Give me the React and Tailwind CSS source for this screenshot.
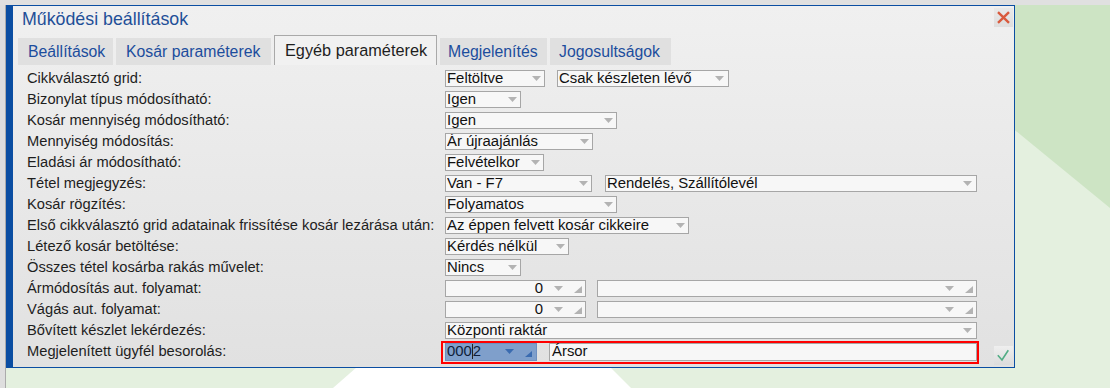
import React from "react";

const FONT = { fontFamily: '"Liberation Sans", Arial, sans-serif' };

function Arrow({ color = "#b3b3b3" }) {
  return (
    <svg width="9" height="5" viewBox="0 0 9 5" className="shrink-0">
      <path d="M0 0H9L4.5 5Z" fill={color} />
    </svg>
  );
}

function Tri({ color = "#b3b3b3", size = 8 }) {
  return (
    <svg width={size} height={size - 1} viewBox={`0 0 ${size} ${size - 1}`} className="shrink-0 self-end mb-[3px]">
      <path d={`M${size} 0V${size - 1}H0Z`} fill={color} />
    </svg>
  );
}

function Field({ w, text, pr = "pr-[3px]" }) {
  return (
    <div
      className={`flex items-center h-[17px] border border-[#a6a6a6] bg-[#f7f7f7] pl-[1px] ${pr} text-[14.9px] text-[#111] leading-none`}
      style={{ width: w }}
    >
      <span className="flex-1 whitespace-nowrap overflow-hidden">{text}</span>
      <Arrow />
    </div>
  );
}

function NumField({ w, value }) {
  return (
    <div
      className="flex items-center justify-end h-[17px] border border-[#a6a6a6] bg-[#f7f7f7] pr-[3px] text-[14.9px] text-[#111] leading-none"
      style={{ width: w }}
    >
      {value !== undefined && <span className="mr-[11px]">{value}</span>}
      <span className="mr-[11px] flex items-center">
        <Arrow />
      </span>
      <Tri />
    </div>
  );
}

const rows = [
  { label: "Cikkválasztó grid:", f: [{ w: 100, t: "Feltöltve" }, { w: 172, t: "Csak készleten lévő", pr: "pr-[4px]" }], gap: 12 },
  { label: "Bizonylat típus módosítható:", f: [{ w: 76, t: "Igen" }] },
  { label: "Kosár mennyiség módosítható:", f: [{ w: 172, t: "Igen" }] },
  { label: "Mennyiség módosítás:", f: [{ w: 148, t: "Ár újraajánlás" }] },
  { label: "Eladási ár módosítható:", f: [{ w: 99, t: "Felvételkor" }] },
  { label: "Tétel megjegyzés:", f: [{ w: 147, t: "Van - F7" }, { w: 372, t: "Rendelés, Szállítólevél", pr: "pr-[4px]" }], gap: 13 },
  { label: "Kosár rögzítés:", f: [{ w: 172, t: "Folyamatos" }] },
  { label: "Első cikkválasztó grid adatainak frissítése kosár lezárása után:", f: [{ w: 244, t: "Az éppen felvett kosár cikkeire" }] },
  { label: "Létező kosár betöltése:", f: [{ w: 124, t: "Kérdés nélkül" }] },
  { label: "Összes tétel kosárba rakás művelet:", f: [{ w: 76, t: "Nincs" }] },
];

function Label({ children }) {
  return (
    <div className="w-[432px] shrink-0 pl-[14px] whitespace-nowrap text-[14.7px] text-[#1e1e1e] leading-none">
      {children}
    </div>
  );
}

export default function App() {
  return (
    <div className="w-[1110px] h-[388px] overflow-hidden bg-[#dfdfdf] flex flex-col" style={FONT}>
      <div className="h-[5px] shrink-0 bg-[#e0e0e0]" />
      <div className="flex flex-1 min-h-0">
        <div className="w-[5px] shrink-0 bg-[#dedede]" />
        <div className="relative flex-1 border-l border-[#ababab] flex flex-col">
          <svg className="absolute inset-0 w-full h-full" viewBox="6 5 1104 383" preserveAspectRatio="none">
            <rect x="0" y="0" width="1110" height="388" fill="#e4f0df" />
            <polygon points="900,5 1110,5 1110,208 900,36" fill="#cde4c4" />
            <polygon points="357,367 610,367 631,388 333,388" fill="#ffffff" />
          </svg>

          {/* Dialog */}
          <div className="relative w-[1009px] h-[363px] border-l-[7px] border-t border-r border-b border-[#0b4ea2] bg-gradient-to-b from-[#f0f0f0] to-[#e1e1e1] flex flex-col">
            {/* Title */}
            <div className="h-[29px] flex justify-between shrink-0">
              <div className="pl-[9px] pb-[2px] self-center text-[17.8px] text-[#1f4f98] leading-none whitespace-nowrap">
                Működési beállítások
              </div>
              <div className="mt-[2px] mr-[1px] w-[19px] h-[19px] bg-gradient-to-b from-[#e9e9e9] to-[#dedede] flex items-center justify-center">
                <svg width="19" height="19" viewBox="0 0 19 19">
                  <path d="M4 4.2L15 14.8M15 4.2L4 14.8" stroke="#d95a3d" strokeWidth="2.4" />
                </svg>
              </div>
            </div>

            {/* Tabs */}
            <div className="h-[30px] flex items-end gap-[3px] pl-[5px] shrink-0 text-[15.8px] leading-none whitespace-nowrap">
              <div className="w-[95px] h-[27px] bg-[#e0e0e0] text-[#1c4d9d] flex items-center pl-[10px]">Beállítások</div>
              <div className="w-[155px] h-[27px] bg-[#e0e0e0] text-[#1c4d9d] flex items-center pl-[10px]">Kosár paraméterek</div>
              <div className="w-[163px] h-[30px] bg-[#f1f1f1] border-t border-l border-r border-[#a9a9a9] text-[#1e1e1e] text-[16.3px] flex items-center pl-[10px]">Egyéb paraméterek</div>
              <div className="w-[107px] h-[27px] bg-[#e0e0e0] text-[#1c4d9d] flex items-center pl-[8px]">Megjelenítés</div>
              <div className="w-[121px] h-[27px] bg-[#e0e0e0] text-[#1c4d9d] flex items-center pl-[9px]">Jogosultságok</div>
            </div>

            {/* Rows */}
            <div className="mt-[3px] flex flex-col">
              {rows.map((r, i) => (
                <div key={i} className="h-[21px] flex items-center">
                  <Label>{r.label}</Label>
                  <div className="flex items-center" style={{ gap: r.gap || 0 }}>
                    {r.f.map((f, j) => (
                      <Field key={j} w={f.w} text={f.t} pr={f.pr} />
                    ))}
                  </div>
                </div>
              ))}

              <div className="h-[21px] flex items-center">
                <Label>Ármódosítás aut. folyamat:</Label>
                <div className="flex items-center gap-[11px]">
                  <NumField w={141} value="0" />
                  <NumField w={380} />
                </div>
              </div>
              <div className="h-[21px] flex items-center">
                <Label>Vágás aut. folyamat:</Label>
                <div className="flex items-center gap-[11px]">
                  <NumField w={141} value="0" />
                  <NumField w={380} />
                </div>
              </div>
              <div className="h-[21px] flex items-center">
                <Label>Bővített készlet lekérdezés:</Label>
                <Field w={532} text="Központi raktár" pr="pr-[4px]" />
              </div>
              <div className="h-[21px] flex items-center">
                <Label>Megjelenített ügyfél besorolás:</Label>
                <div className="relative flex items-center gap-[12px]">
                  <div className="flex items-center h-[18px] w-[92px] border border-[#6d8fc0] bg-[#7f9fcb] pl-[1px] pr-[4px] text-[14.9px] text-[#0f1e3a] leading-none">
                    <span className="flex-1 whitespace-nowrap relative">
                      000
                      <span className="inline-block w-[1px] h-[15px] bg-[#222] align-[-3px]" />
                      2
                    </span>
                    <span className="mr-[11px] flex items-center">
                      <Arrow color="#3a6bb0" />
                    </span>
                    <Tri color="#3a6bb0" size={7} />
                  </div>
                  <div className="flex items-center h-[18px] w-[428px] border border-[#a6a6a6] bg-[#f7f7f7] pl-[2px] text-[14.9px] text-[#111] leading-none">
                    Ársor
                  </div>
                  <div className="absolute left-[-4px] right-[-2px] top-[-2px] bottom-[-3px] border-[2.5px] border-[#ff0000] pointer-events-none" />
                </div>
                <div className="ml-auto mr-[1px] self-start mt-[5px] w-[19px] h-[19px] bg-gradient-to-b from-[#efefef] to-[#dcdcdc] flex items-center justify-center">
                  <svg width="19" height="19" viewBox="0 0 19 19">
                    <path d="M3.8 9.2L8 14L14.3 4.2" stroke="#52ad85" strokeWidth="1.6" fill="none" />
                  </svg>
                </div>
              </div>
            </div>
          </div>
        </div>
      </div>
    </div>
  );
}
